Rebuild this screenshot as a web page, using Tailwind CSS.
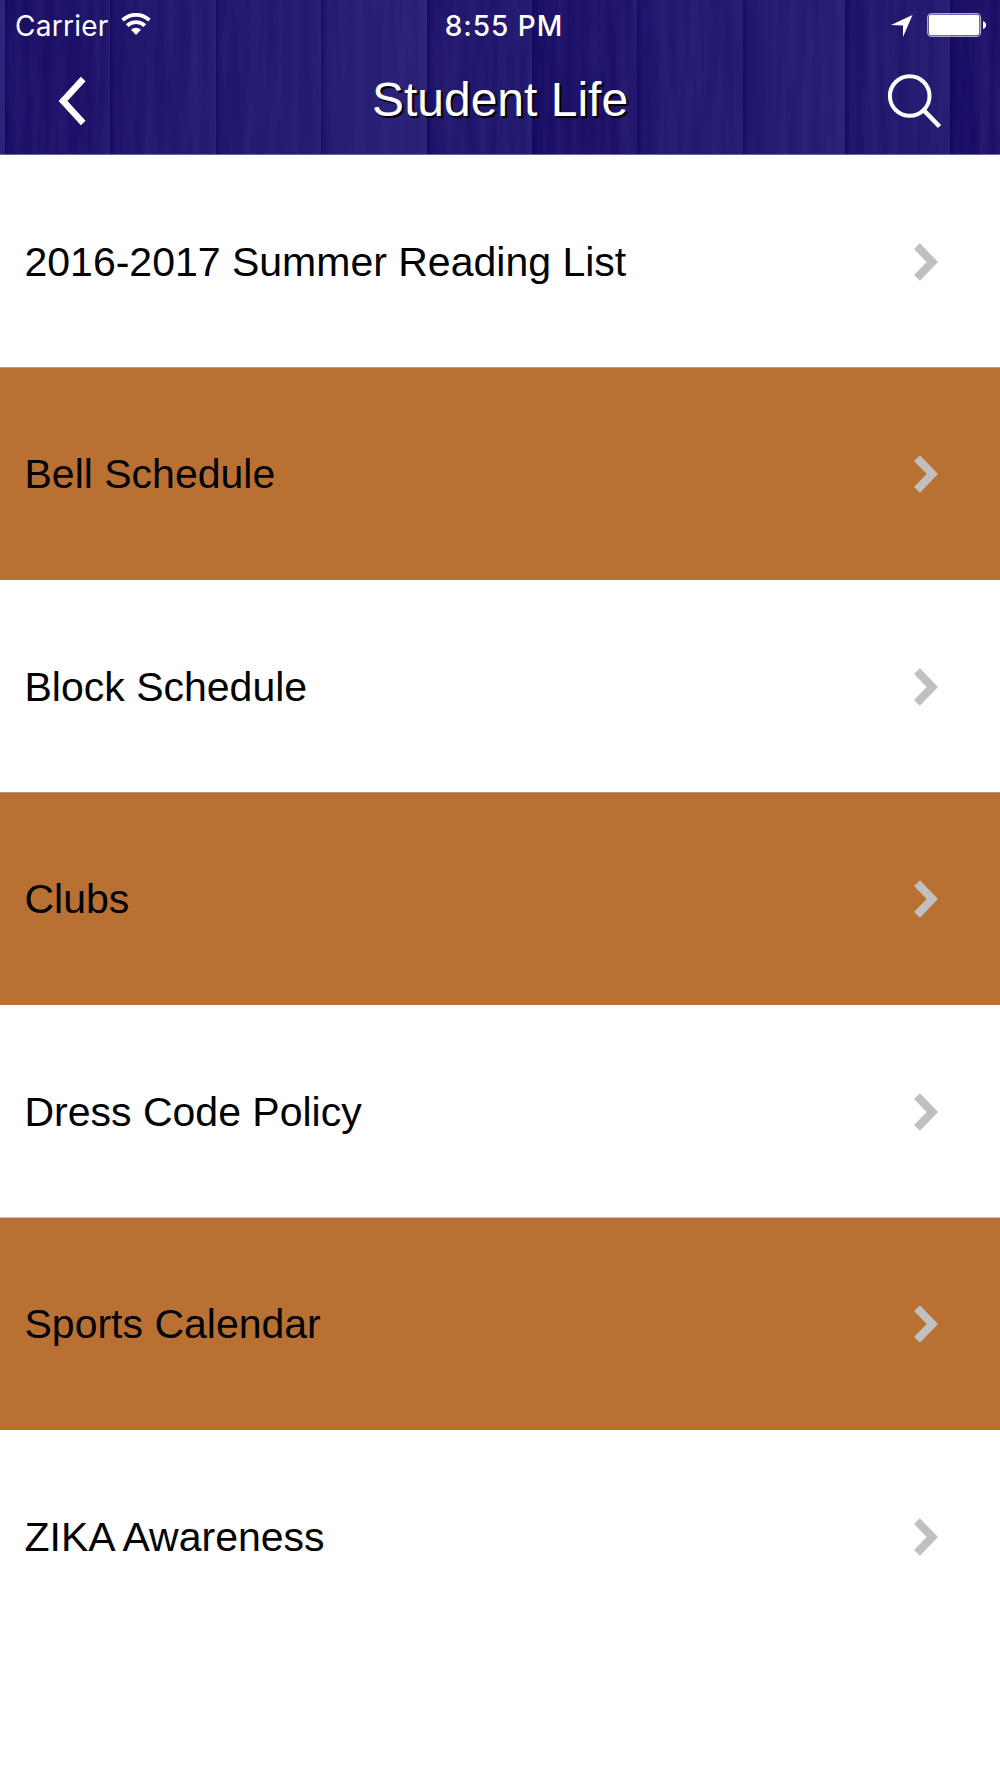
<!DOCTYPE html>
<html lang="en">
<head>
    <meta charset="UTF-8">
    <meta name="viewport" content="width=device-width, initial-scale=1.0">
    <title>Student Life</title>
    <script src="https://cdn.jsdelivr.net/npm/@tailwindcss/browser@4"></script>
</head>
<body class="bg-white font-['Liberation_Sans',Arial,sans-serif] text-black">
    <header class="relative h-[155px] overflow-hidden bg-[#23196e] text-white">
        <!-- Wood planks -->
        <svg class="absolute inset-0" width="1000" height="155" viewBox="0 0 1000 155" preserveAspectRatio="none">
            <defs>
                <linearGradient id="edge"><stop offset="0" stop-color="#0b0055" stop-opacity=".6"/><stop offset=".06" stop-color="#120660" stop-opacity=".25"/><stop offset=".3" stop-color="#120660" stop-opacity="0"/><stop offset=".9" stop-color="#3a3285" stop-opacity=".05"/><stop offset="1" stop-color="#3a3285" stop-opacity=".25"/></linearGradient>
                <filter id="grain" x="0" y="0" width="100%" height="100%" color-interpolation-filters="sRGB">
                    <feTurbulence type="fractalNoise" baseFrequency="0.09 0.006" numOctaves="3" seed="8"/>
                    <feColorMatrix values="0 0 0 0 .22  0 0 0 0 .18  0 0 0 0 .51  2 0 0 0 -.6"/>
                </filter>
            </defs>
            <rect width="5" height="155" fill="#2a2278"/>
            <rect x="5" width="105" height="155" fill="#1b1066"/>
            <rect x="110" width="106" height="155" fill="#20166b"/>
            <rect x="216" width="105" height="155" fill="#22196d"/>
            <rect x="321" width="106" height="155" fill="#281f73"/>
            <rect x="427" width="105" height="155" fill="#1f156a"/>
            <rect x="532" width="105" height="155" fill="#1b1066"/>
            <rect x="637" width="106" height="155" fill="#21186d"/>
            <rect x="743" width="102" height="155" fill="#241b6f"/>
            <rect x="845" width="105" height="155" fill="#20166b"/>
            <rect x="950" width="50" height="155" fill="#1a0f65"/>
            <rect width="1000" height="155" filter="url(#grain)" opacity=".38"/>
            <g fill="url(#edge)">
                <rect x="5" width="105" height="155"/>
                <rect x="110" width="106" height="155"/>
                <rect x="216" width="105" height="155"/>
                <rect x="321" width="106" height="155"/>
                <rect x="427" width="105" height="155"/>
                <rect x="532" width="105" height="155"/>
                <rect x="637" width="106" height="155"/>
                <rect x="743" width="102" height="155"/>
                <rect x="845" width="105" height="155"/>
                <rect x="950" width="105" height="155"/>
            </g>
            <rect y="154" width="1000" height="1" fill="#6b64a3"/>
        </svg>

        <!-- Status bar -->
        <div class="relative grid h-[50px] grid-cols-3 items-center pr-[14px] pl-[15px] font-['Inter',sans-serif] text-[28px] leading-[50px]">
            <div class="flex items-center gap-[12px] pt-px">
                <span class="tracking-[0.25px]">Carrier</span>
                <svg class="mb-[4px]" width="30" height="22" viewBox="0 0 30 22" fill="none" stroke="#fff">
                    <path d="M1.6 7.2a19.4 19.4 0 0 1 26.8 0" stroke-width="3.8"/>
                    <path d="M6.2 12.6a12.8 12.8 0 0 1 17.6 0" stroke-width="3.8"/>
                    <path d="M10 16.8a7.2 7.2 0 0 1 10 0L15 22z" fill="#fff" stroke="none"/>
                </svg>
            </div>
            <span class="pt-px pl-[7px] text-center font-medium tracking-[1px]">8:55 PM</span>
            <div class="flex items-center justify-end gap-[14px]">
                <svg width="22" height="22" viewBox="0 0 22 22" fill="#fff"><path d="M0 10 21.5 0 12 22V10.5z"/></svg>
                <svg class="-mt-px" width="59" height="24" viewBox="0 0 59 24">
                    <rect x=".6" y=".6" width="53" height="22.8" rx="4" fill="none" stroke="#aaa5cc" stroke-width="1.2"/>
                    <rect x="1.8" y="1.8" width="50.6" height="20.4" rx="2.6" fill="#fff"/>
                    <path d="M56 8q3 1 3 4t-3 4z" fill="#fff"/>
                </svg>
            </div>
        </div>

        <!-- Navigation bar -->
        <div class="relative flex h-[104px] items-start justify-between pr-[58px] pl-[58px]">
            <svg class="mt-[26px]" width="58" height="50" viewBox="0 0 58 50" fill="none" stroke="#fff" stroke-width="6.4"><path d="M25.2 3 5 25l20.2 22"/></svg>
            <h1 class="mt-[23px] text-[48px] leading-[54px] [text-shadow:2px_2px_1px_#000]">Student Life</h1>
            <svg class="mt-[23px]" width="58" height="56" viewBox="0 0 58 56" fill="none" stroke="#fff"><circle cx="25.7" cy="23" r="19.8" stroke-width="4"/><path d="m39.5 37 16 16.5" stroke-width="4.6"/></svg>
        </div>
    </header>

    <svg class="hidden">
        <symbol id="chevron" viewBox="0 0 24 38"><path d="M3 3.2 18.3 19 3 34.8" fill="none" stroke="#c0c0c0" stroke-width="8.2"/></symbol>
    </svg>

    <ul class="text-[41px] leading-[48px]">
        <li class="flex h-[212px] items-center justify-between pt-px pr-[62px] pl-[24.5px]">
            <span>2016-2017 Summer Reading List</span>
            <svg width="24" height="38"><use href="#chevron"/></svg>
        </li>
        <li class="flex h-[213px] items-center justify-between border-t border-[#b39a87] bg-[#b87033] pr-[62px] pl-[24.5px]">
            <span>Bell Schedule</span>
            <svg width="24" height="38"><use href="#chevron"/></svg>
        </li>
        <li class="flex h-[212px] items-center justify-between pt-px pr-[62px] pl-[24.5px]">
            <span>Block Schedule</span>
            <svg width="24" height="38"><use href="#chevron"/></svg>
        </li>
        <li class="flex h-[213px] items-center justify-between border-t border-[#b39a87] bg-[#b87033] pr-[62px] pl-[24.5px]">
            <span>Clubs</span>
            <svg width="24" height="38"><use href="#chevron"/></svg>
        </li>
        <li class="flex h-[212px] items-center justify-between pt-px pr-[62px] pl-[24.5px]">
            <span>Dress Code Policy</span>
            <svg width="24" height="38"><use href="#chevron"/></svg>
        </li>
        <li class="flex h-[213px] items-center justify-between border-t border-[#d9c3b3] bg-[#b87033] pr-[62px] pl-[24.5px]">
            <span>Sports Calendar</span>
            <svg width="24" height="38"><use href="#chevron"/></svg>
        </li>
        <li class="flex h-[213px] items-center justify-between pr-[62px] pl-[24.5px]">
            <span>ZIKA Awareness</span>
            <svg width="24" height="38"><use href="#chevron"/></svg>
        </li>
    </ul>
</body>
</html>
